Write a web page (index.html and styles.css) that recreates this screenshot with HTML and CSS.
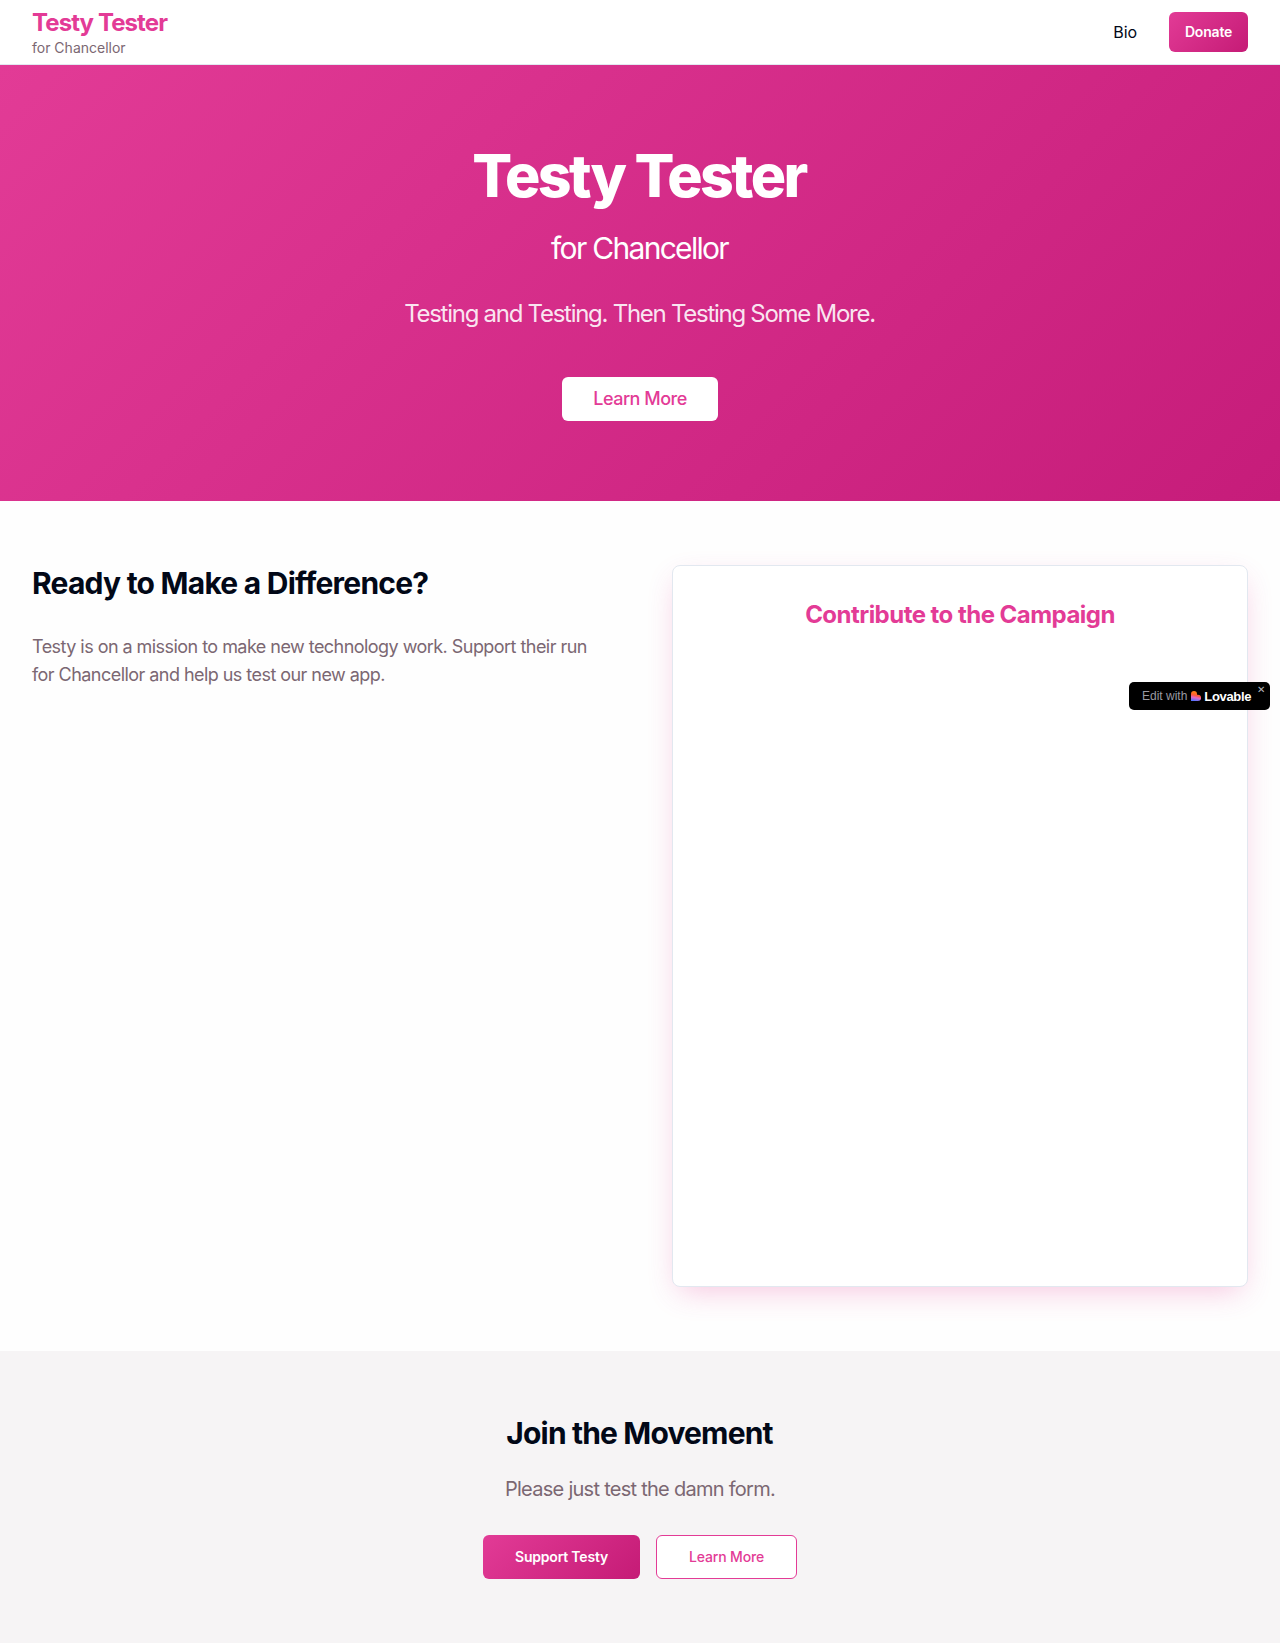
FILE: index.html
```html
<!DOCTYPE html>
<html lang="en">
<head>
<meta charset="utf-8">
<title>Testy Tester for Chancellor</title>
<link rel="stylesheet" href="styles.css">
</head>
<body>
<header class="site-header">
  <div class="brand"><span class="brand-name">Testy Tester</span><span class="brand-role">for Chancellor</span></div>
  <nav class="nav"><a class="nav-link">Bio</a><a class="btn btn-primary btn-small">Donate</a></nav>
</header>
<section class="hero">
  <h1 class="hero-title">Testy Tester</h1>
  <p class="hero-role">for Chancellor</p>
  <p class="hero-tagline">Testing and Testing. Then Testing Some More.</p>
  <a class="btn btn-light">Learn More</a>
</section>
<main class="pitch">
  <div class="pitch-copy">
    <h2 class="heading">Ready to Make a Difference?</h2>
    <p class="pitch-text">Testy is on a mission to make new technology work. Support their run<br>for Chancellor and help us test our new app.</p>
  </div>
  <div class="card"><h3 class="card-title">Contribute to the Campaign</h3></div>
</main>
<section class="join">
  <h2 class="heading join-heading">Join the Movement</h2>
  <p class="join-text">Please just test the damn form.</p>
  <div class="actions"><a class="btn btn-primary btn-support">Support Testy</a><a class="btn btn-outline">Learn More</a></div>
</section>
<aside class="badge">
  <span class="badge-label">Edit with</span>
  <svg class="badge-logo" viewBox="0 0 20 20" aria-hidden="true">
    <defs><linearGradient id="heart" x1="0.6" y1="0" x2="0.4" y2="1"><stop offset="0.2" stop-color="#ff7a1a"/><stop offset="0.45" stop-color="#ff5a3c"/><stop offset="0.68" stop-color="#e268c8"/><stop offset="1" stop-color="#5572ff"/></linearGradient></defs>
    <path fill="url(#heart)" d="M6 0a6 6 0 0 1 6 6v1.500h2a6 6 0 0 1 0 12.500H0V6a6 6 0 0 1 6-6z"/>
  </svg>
  <span class="badge-name">Lovable</span>
  <span class="badge-close">✕</span>
</aside>
</body>
</html>
```
FILE: styles.css
```css
* { box-sizing: border-box; margin: 0; }
body { font-family: Inter, "Liberation Sans", sans-serif; color: #020817; background: #fefefe; position: relative; }
.site-header { height: 65px; padding: 0 32px; display: flex; justify-content: space-between; align-items: center; background: #fff; border-bottom: 1px solid #e2e8f0; }
.brand { display: flex; flex-direction: column; align-items: flex-start; }
.brand-name { margin-top: 1px; font-size: 24px; line-height: 32px; font-weight: 700; letter-spacing: -0.9px; color: #e33b96; }
.brand-role { margin-top: -1px; font-size: 14px; line-height: 20px; color: #7b6772; }
.nav { display: flex; align-items: center; gap: 32px; }
.nav-link { font-size: 16px; line-height: 24px; letter-spacing: -0.1px; }
.btn { display: inline-flex; align-items: center; justify-content: center; height: 44px; border-radius: 6px; font-size: 14px; line-height: 20px; font-weight: 500; letter-spacing: -0.15px; white-space: nowrap; }
.btn-primary { color: #fff; font-weight: 600; letter-spacing: -0.2px; background: linear-gradient(135deg, #e23b96, #c51b76); }
.btn-small { width: 79px; height: 40px; }
.btn-light { width: 156px; background: #fff; color: #e33b96; font-size: 18px; letter-spacing: -0.5px; }
.btn-support { width: 157px; }
.btn-outline { width: 141px; background: #fff; color: #e33b96; border: 1px solid #e33b96; }
.hero { height: 436px; padding: 81px 32px 79px; display: flex; flex-direction: column; align-items: center; color: #fff; background: linear-gradient(135deg, #e23b96, #c61c7a); }
.hero-title { font-size: 59px; line-height: 60px; font-weight: 780; letter-spacing: -2.6px; padding-right: 2px; margin-bottom: 24px; }
.hero-role { font-size: 30px; line-height: 36px; font-weight: 400; letter-spacing: -1.7px; padding-right: 1px; margin-bottom: 32px; }
.hero-tagline { font-size: 24px; line-height: 32px; letter-spacing: -1.27px; padding-right: 1px; margin-bottom: 47px; color: rgba(255,255,255,.9); }
.pitch { padding: 64px 32px; display: grid; grid-template-columns: minmax(0, 1fr) minmax(0, 1fr); gap: 64px; }
.heading { font-size: 30px; line-height: 36px; font-weight: 700; letter-spacing: -0.77px; }
.pitch-text { margin-top: 32px; font-size: 18px; line-height: 28px; letter-spacing: -0.545px; color: #7b6772; white-space: nowrap; }
.card { height: 722px; padding: 33px 32px; border: 1px solid #e2e8f0; border-radius: 8px; background: #fff; box-shadow: 0 10px 30px -7px rgba(227,59,150,.3); }
.card-title { font-size: 24px; line-height: 32px; font-weight: 700; letter-spacing: -0.53px; text-align: center; color: #e33b96; }
.join { height: 292px; padding: 64px 32px; display: flex; flex-direction: column; align-items: center; background: #f6f4f5; }
.join-heading { letter-spacing: -0.84px; padding-right: 1px; }
.join-text { margin: 24px 0 32px; font-size: 20px; line-height: 28px; letter-spacing: -0.73px; color: #7b6772; }
.actions { display: flex; gap: 16px; }
.badge { position: absolute; top: 682px; right: 10px; width: 141px; height: 28px; padding-left: 13px; display: flex; align-items: center; border-radius: 5px; background: #000; font-family: "Liberation Sans", sans-serif; color: #fff; }
.badge-label { font-size: 12px; color: #9a9aa3; }
.badge-logo { width: 10px; height: 10px; margin: 0 3px 0 4px; }
.badge-name { font-size: 13px; font-weight: 700; letter-spacing: -0.35px; }
.badge-close { position: absolute; top: 3px; right: 5px; font-size: 10px; line-height: 10px; color: #b5b5bd; }
```
